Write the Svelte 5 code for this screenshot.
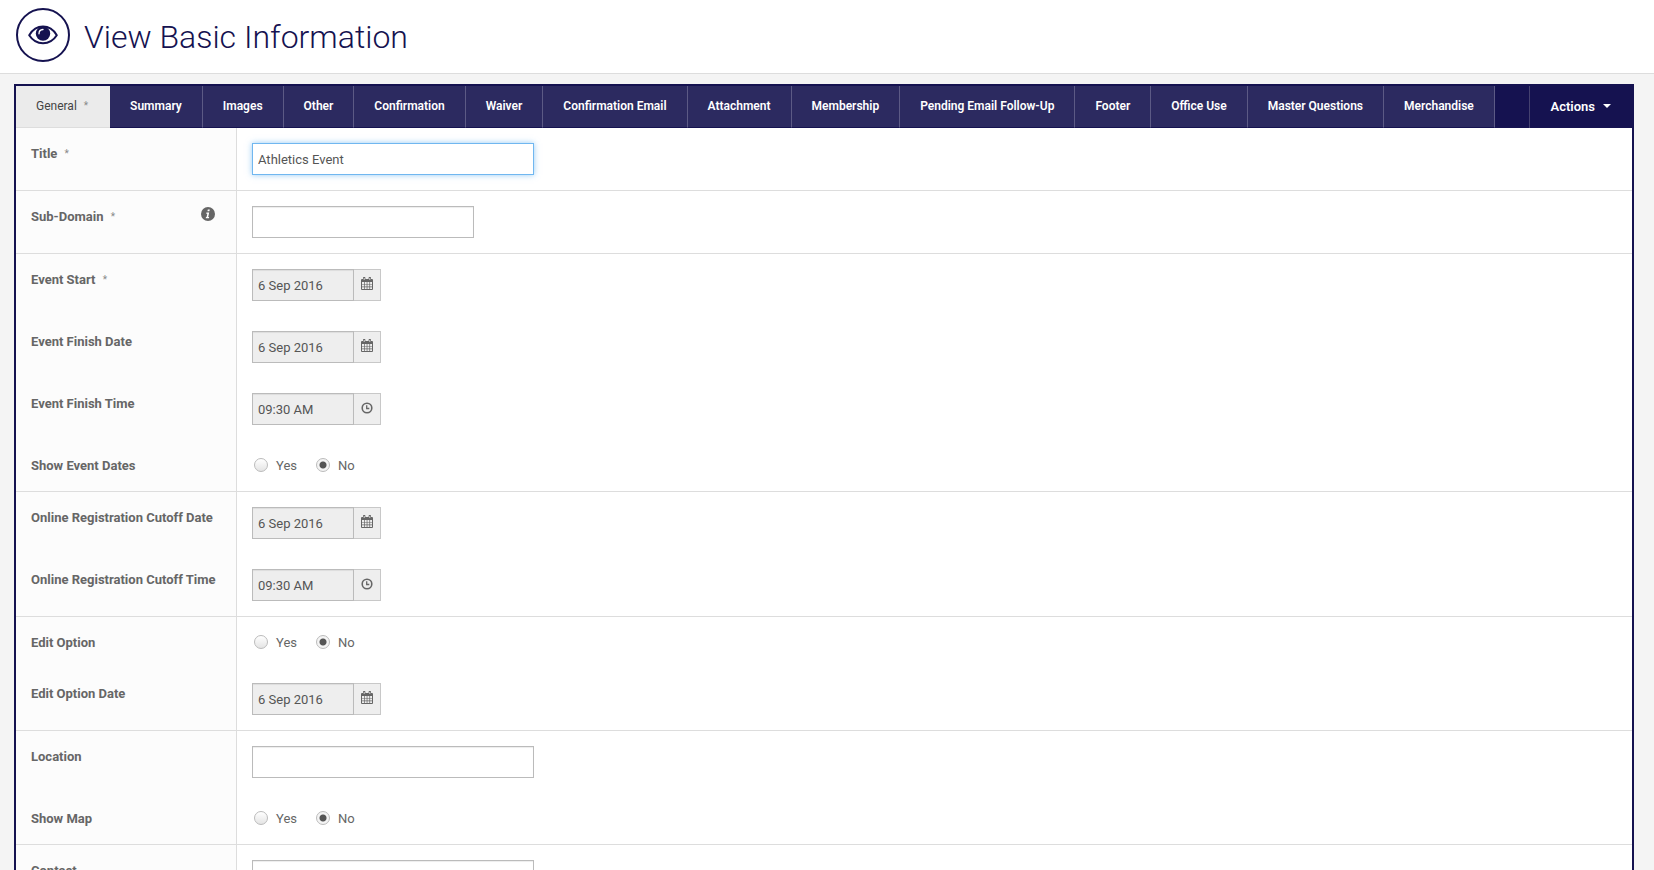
<script lang="ts">
	type Field = {
		id: string;
		label: string;
		kind: 'text' | 'date' | 'time' | 'choice';
		value?: string;
		required?: boolean;
		info?: boolean;
		narrow?: boolean;
		active?: boolean;
	};

	const tabs = [
		'General',
		'Summary',
		'Images',
		'Other',
		'Confirmation',
		'Waiver',
		'Confirmation Email',
		'Attachment',
		'Membership',
		'Pending Email Follow-Up',
		'Footer',
		'Office Use',
		'Master Questions',
		'Merchandise'
	];

	let activeTab = $state('General');

	// Each inner list is one block of rows, closed by a rule
	let groups = $state<Field[][]>([
		[{ id: 'title', label: 'Title', kind: 'text', value: 'Athletics Event', required: true, active: true }],
		[{ id: 'subdomain', label: 'Sub-Domain', kind: 'text', value: '', required: true, info: true, narrow: true }],
		[
			{ id: 'event-start', label: 'Event Start', kind: 'date', value: '6 Sep 2016', required: true },
			{ id: 'finish-date', label: 'Event Finish Date', kind: 'date', value: '6 Sep 2016' },
			{ id: 'finish-time', label: 'Event Finish Time', kind: 'time', value: '09:30 AM' },
			{ id: 'show-dates', label: 'Show Event Dates', kind: 'choice', value: 'No' }
		],
		[
			{ id: 'cutoff-date', label: 'Online Registration Cutoff Date', kind: 'date', value: '6 Sep 2016' },
			{ id: 'cutoff-time', label: 'Online Registration Cutoff Time', kind: 'time', value: '09:30 AM' }
		],
		[
			{ id: 'edit-option', label: 'Edit Option', kind: 'choice', value: 'No' },
			{ id: 'edit-date', label: 'Edit Option Date', kind: 'date', value: '6 Sep 2016' }
		],
		[
			{ id: 'location', label: 'Location', kind: 'text', value: '' },
			{ id: 'show-map', label: 'Show Map', kind: 'choice', value: 'No' }
		],
		[{ id: 'contact', label: 'Contact', kind: 'text', value: '' }]
	]);
</script>

{#snippet labelText(field: Field)}
	{field.label}
	{#if field.required}<span class="required">*</span>{/if}
{/snippet}

<header class="page-header">
	<span class="page-icon">
		<svg width="30" height="20" viewBox="0 0 30 20" aria-hidden="true">
			<path
				d="M1.2 10.2C4.5 4.8 9.3 1.6 15 1.6s10.5 3.2 13.8 8.6C25.5 15.3 20.7 18.2 15 18.2S4.5 15.3 1.2 10.2z"
				fill="none"
				stroke="currentColor"
				stroke-width="2"
				stroke-linejoin="round"
			/>
			<circle cx="15" cy="8.6" r="7.2" fill="currentColor" />
			<path d="M11 8.8c0-2.5 1.5-4.2 4-4.3" fill="none" stroke="#fff" stroke-width="1.3" stroke-linecap="round" />
		</svg>
	</span>
	<h1>View Basic Information</h1>
</header>

<main class="panel">
	<nav class="tabbar">
		<div class="tabs">
			{#each tabs as tab (tab)}
				<button type="button" class="tab" class:active={tab === activeTab} onclick={() => (activeTab = tab)}>
					{tab}
					{#if tab === 'General'}<span class="required">*</span>{/if}
				</button>
			{/each}
		</div>
		<button type="button" class="actions">
			Actions
			<svg width="8" height="4" viewBox="0 0 8 4" aria-hidden="true"><path d="M0 0h8L4 4z" fill="currentColor" /></svg>
		</button>
	</nav>

	<form>
		{#each groups as group, index (index)}
			<div class="group">
				{#each group as field (field.id)}
					<div class="row">
						<div class="label-cell">
							{#if field.kind === 'choice'}
								<span class="label" id={field.id}>{@render labelText(field)}</span>
							{:else}
								<label class="label" for={field.id}>{@render labelText(field)}</label>
							{/if}
							{#if field.info}
								<svg class="info" width="14" height="14" viewBox="0 0 14 14" role="img" aria-label="Information">
									<circle cx="7" cy="7" r="7" fill="currentColor" />
									<path d="M6.8 2.5h2l-.4 1.8h-2zM5.4 5.4h2.8l-1 4.5h1l-.3 1.3H4.7l.3-1.3h.6l.7-3.2H5.2z" fill="#fff" />
								</svg>
							{/if}
						</div>
						<div class="control-cell">
							{#if field.kind === 'text'}
								<input
									id={field.id}
									class="text-input"
									class:narrow={field.narrow}
									class:active={field.active}
									type="text"
									bind:value={field.value}
								/>
							{:else if field.kind === 'choice'}
								<div class="choices" role="radiogroup" aria-labelledby={field.id}>
									{#each ['Yes', 'No'] as option (option)}
										<label class="choice">
											<input type="radio" name={field.id} value={option} bind:group={field.value} />
											{option}
										</label>
									{/each}
								</div>
							{:else}
								<div class="picker">
									<input id={field.id} type="text" readonly value={field.value} />
									<button type="button" aria-label={`Pick ${field.label}`}>
										{#if field.kind === 'date'}
											<svg width="12" height="13" viewBox="0 0 12 13" aria-hidden="true">
												<path d="M1 2h10a1 1 0 0 1 1 1v9a1 1 0 0 1-1 1H1a1 1 0 0 1-1-1V3a1 1 0 0 1 1-1z" fill="currentColor" />
												<path
													d="M1 5h2v2H1zM3.7 5h2v2h-2zM6.4 5h2v2h-2zM9.1 5H11v2H9.1zM1 7.6h2v2H1zM3.7 7.6h2v2h-2zM6.4 7.6h2v2h-2zM9.1 7.6H11v2H9.1zM1 10.2h2V12H1zM3.7 10.2h2V12h-2zM6.4 10.2h2V12h-2zM9.1 10.2H11V12H9.1z"
													fill="#eee"
												/>
												<path d="M3.2 1v2M8.8 1v2" stroke="currentColor" stroke-width="2.4" stroke-linecap="round" />
												<path d="M3.2 1v2M8.8 1v2" stroke="#eee" stroke-width="0.8" />
											</svg>
										{:else}
											<svg width="12" height="12" viewBox="0 0 12 12" aria-hidden="true">
												<circle cx="6" cy="6" r="4.8" fill="none" stroke="currentColor" stroke-width="1.6" />
												<path d="M5.7 3.2v3.3h2.6" fill="none" stroke="currentColor" stroke-width="1.3" />
											</svg>
										{/if}
									</button>
								</div>
							{/if}
						</div>
					</div>
				{/each}
			</div>
		{/each}
	</form>
</main>

<style>
	:global(body) {
		background: #f4f4f4;
		color: #555;
		font: 13px/21px Roboto, 'Liberation Sans', sans-serif;
	}

	button,
	input {
		box-sizing: border-box;
		margin: 0;
		border-radius: 0;
		font: inherit;
	}

	.page-header {
		display: flex;
		align-items: center;
		gap: 14px;
		box-sizing: border-box;
		min-height: 74px;
		padding: 7px 16px 11px;
		border-bottom: 1px solid #ddd;
		background: #fff;
		color: #151250;
	}

	.page-icon {
		display: grid;
		place-items: center;
		box-sizing: border-box;
		width: 54px;
		height: 54px;
		border: 2px solid currentColor;
		border-radius: 50%;
	}

	h1 {
		margin: 0;
		padding-top: 4px;
		font-size: 32px;
		font-weight: 300;
		line-height: 40px;
	}

	.panel {
		margin: 10px 20px 20px 14px;
		border: 2px solid #151250;
		background: #fff;
	}

	.tabbar {
		display: flex;
		justify-content: space-between;
		background: #151250;
	}

	.tabs {
		display: flex;
	}

	.tab {
		height: 42px;
		padding: 0 20px;
		border: 0;
		border-right: 1px solid #5c5a85;
		border-bottom: 1px solid #151250;
		background: #2c2a60;
		color: #fff;
		font-size: 12px;
		font-weight: 600;
		white-space: nowrap;
		cursor: pointer;
	}

	.tab.active {
		padding-right: 22px;
		border-right: 0;
		border-bottom-color: #ddd;
		background: #ebebeb;
		color: #444;
		font-weight: 400;
	}

	.required {
		margin-left: 4px;
		color: #888;
		font-size: 10px;
		font-weight: 400;
		line-height: 10px;
		vertical-align: 1px;
	}

	.actions {
		display: flex;
		align-items: center;
		gap: 8px;
		height: 42px;
		padding: 0 21px 2px 20px;
		border: 0;
		border-left: 1px solid #44416f;
		background: #151250;
		color: #fff;
		font-weight: 600;
		cursor: pointer;
	}

	.group {
		border-bottom: 1px solid #ddd;
	}

	.row {
		display: grid;
		grid-template-columns: 221px 1fr;
	}

	.label-cell {
		display: flex;
		justify-content: space-between;
		align-items: flex-start;
		box-sizing: border-box;
		padding: 15px 21px 15px 15px;
		border-right: 1px solid #ddd;
		background: #fcfcfc;
	}

	.label {
		color: #666;
		font-weight: 700;
		white-space: nowrap;
	}

	.info {
		margin-top: 1px;
		color: #666;
	}

	.control-cell {
		padding: 15px;
	}

	.text-input,
	.picker input {
		display: block;
		height: 32px;
		padding: 1px 5px 0;
		border: 1px solid #bbb;
		background: #fff;
		box-shadow: inset 0 1px 1px rgba(0, 0, 0, 0.075);
		color: #555;
		outline: 0;
	}

	.text-input {
		width: 282px;
	}

	.text-input.narrow {
		width: 222px;
	}

	.text-input.active,
	.text-input:focus {
		border-color: #70b7f0;
		box-shadow: 0 0 6px rgba(82, 168, 236, 0.6);
	}

	.picker {
		display: flex;
	}

	.picker input {
		width: 102px;
		background: #eee;
	}

	.picker button {
		display: grid;
		place-items: center;
		width: 27px;
		height: 32px;
		padding: 0 0 3px;
		border: 1px solid #c8c8c8;
		border-left: 0;
		background: #eee;
		color: #666;
		cursor: pointer;
	}

	.choices {
		display: flex;
		gap: 19px;
		padding-left: 2px;
	}

	.choice {
		display: flex;
		align-items: center;
		gap: 8px;
		color: #666;
	}

	.choice input {
		width: 14px;
		height: 14px;
		margin-bottom: 2px;
		border: 1px solid #bbb;
		border-radius: 50%;
		background: linear-gradient(#fff, #e4e4e4);
		appearance: none;
	}

	.choice input:checked {
		background: radial-gradient(circle, #555 0 3px, #f4f4f4 4px);
	}
</style>
